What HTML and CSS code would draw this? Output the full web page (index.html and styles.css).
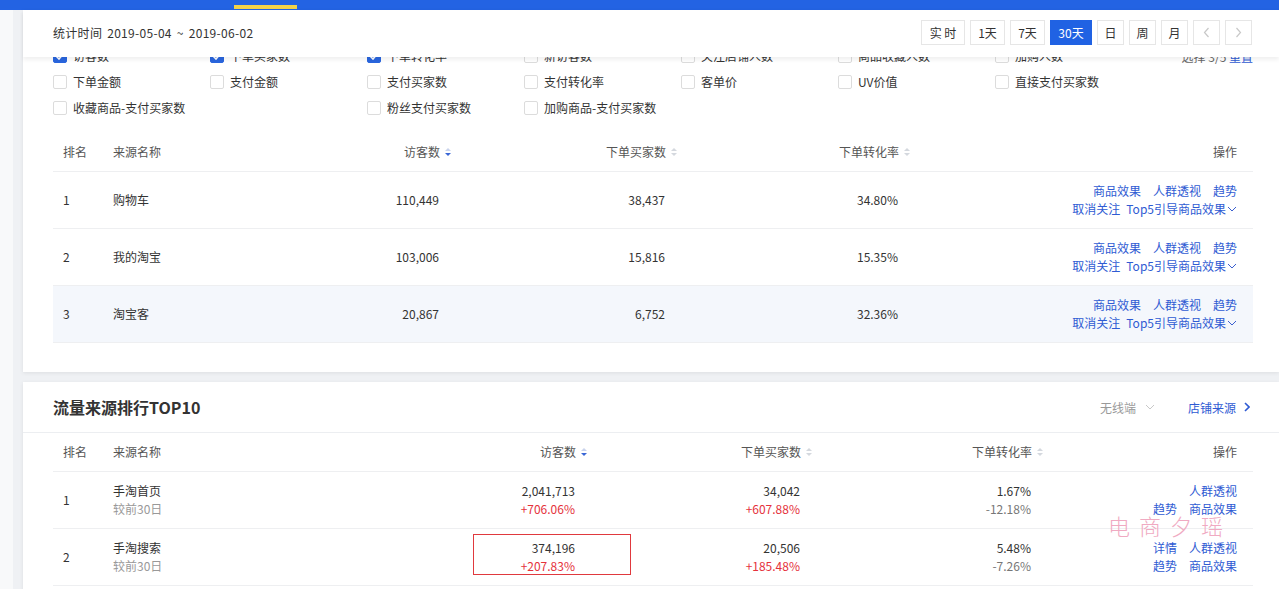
FILE: index.html
```html
<!DOCTYPE html>
<html lang="zh-CN">
<head>
<meta charset="utf-8">
<title>流量来源</title>
<link rel="stylesheet" href="styles.css">
</head>
<body>
<div class="topbar"><span class="topbar-tab"></span></div>
<div class="page">
  <div class="side"></div>
  <main class="main">
    <section class="card card-1">
      <div class="stat-header">
        <div class="stat-time">统计时间 2019-05-04 ~ 2019-06-02</div>
        <div class="range-btns">
          <span class="rbtn w44">实 时</span>
          <span class="rbtn w35">1天</span>
          <span class="rbtn w35">7天</span>
          <span class="rbtn w42 active">30天</span>
          <span class="rbtn w27">日</span>
          <span class="rbtn w27">周</span>
          <span class="rbtn w27">月</span>
          <span class="rbtn w27 arrow"><svg width="7" height="11" viewBox="0 0 7 11"><path d="M5.5 1 L1.5 5.5 L5.5 10" fill="none" stroke="#c8c8c8" stroke-width="1.2"/></svg></span>
          <span class="rbtn w27 arrow"><svg width="7" height="11" viewBox="0 0 7 11"><path d="M1.5 1 L5.5 5.5 L1.5 10" fill="none" stroke="#c8c8c8" stroke-width="1.2"/></svg></span>
        </div>
      </div>
      <div class="filters">
        <label class="cb checked"><i class="box"><svg width="10" height="8" viewBox="0 0 10 8"><path d="M1 4 L4 7 L9 1" fill="none" stroke="#fff" stroke-width="1.6"/></svg></i>访客数</label>
        <label class="cb checked"><i class="box"><svg width="10" height="8" viewBox="0 0 10 8"><path d="M1 4 L4 7 L9 1" fill="none" stroke="#fff" stroke-width="1.6"/></svg></i>下单买家数</label>
        <label class="cb checked"><i class="box"><svg width="10" height="8" viewBox="0 0 10 8"><path d="M1 4 L4 7 L9 1" fill="none" stroke="#fff" stroke-width="1.6"/></svg></i>下单转化率</label>
        <label class="cb"><i class="box"></i>新访客数</label>
        <label class="cb"><i class="box"></i>关注店铺人数</label>
        <label class="cb"><i class="box"></i>商品收藏人数</label>
        <label class="cb"><i class="box"></i>加购人数</label>
        <div class="select-info">选择 3/5 <span class="link">重置</span></div>
        <label class="cb"><i class="box"></i>下单金额</label>
        <label class="cb"><i class="box"></i>支付金额</label>
        <label class="cb"><i class="box"></i>支付买家数</label>
        <label class="cb"><i class="box"></i>支付转化率</label>
        <label class="cb"><i class="box"></i>客单价</label>
        <label class="cb"><i class="box"></i>UV价值</label>
        <label class="cb"><i class="box"></i>直接支付买家数</label>
        <span></span>
        <label class="cb span2"><i class="box"></i>收藏商品-支付买家数</label>
        <label class="cb"><i class="box"></i>粉丝支付买家数</label>
        <label class="cb"><i class="box"></i>加购商品-支付买家数</label>
      </div>
      <div class="table t1">
        <div class="tr thead">
          <div class="td rank">排名</div>
          <div class="td name">来源名称</div>
          <div class="td th-num"><span>访客数</span><svg class="sort" width="6" height="10" viewBox="0 0 6 10"><path d="M0 4 L3 1 L6 4Z" fill="#c9d3ec"/><path d="M0 6 L3 9 L6 6Z" fill="#3a67d6"/></svg></div>
          <div class="td th-num"><span>下单买家数</span><svg class="sort" width="6" height="10" viewBox="0 0 6 10"><path d="M0 4 L3 1 L6 4Z" fill="#d4d8de"/><path d="M0 6 L3 9 L6 6Z" fill="#d4d8de"/></svg></div>
          <div class="td th-num"><span>下单转化率</span><svg class="sort" width="6" height="10" viewBox="0 0 6 10"><path d="M0 4 L3 1 L6 4Z" fill="#d4d8de"/><path d="M0 6 L3 9 L6 6Z" fill="#d4d8de"/></svg></div>
          <div class="td ops">操作</div>
        </div>
        <div class="tr">
          <div class="td rank">1</div>
          <div class="td name">购物车</div>
          <div class="td num">110,449</div>
          <div class="td num">38,437</div>
          <div class="td num">34.80%</div>
          <div class="td ops">
            <div class="ops-line"><span class="link">商品效果</span><span class="link">人群透视</span><span class="link">趋势</span></div>
            <div class="ops-line tight"><span class="link">取消关注</span><span class="link">Top5引导商品效果<svg class="chev" width="10" height="6" viewBox="0 0 10 6"><path d="M1 1 L5 5 L9 1" fill="none" stroke="#3a5fcf" stroke-width="1"/></svg></span></div>
          </div>
        </div>
        <div class="tr">
          <div class="td rank">2</div>
          <div class="td name">我的淘宝</div>
          <div class="td num">103,006</div>
          <div class="td num">15,816</div>
          <div class="td num">15.35%</div>
          <div class="td ops">
            <div class="ops-line"><span class="link">商品效果</span><span class="link">人群透视</span><span class="link">趋势</span></div>
            <div class="ops-line tight"><span class="link">取消关注</span><span class="link">Top5引导商品效果<svg class="chev" width="10" height="6" viewBox="0 0 10 6"><path d="M1 1 L5 5 L9 1" fill="none" stroke="#3a5fcf" stroke-width="1"/></svg></span></div>
          </div>
        </div>
        <div class="tr hover">
          <div class="td rank">3</div>
          <div class="td name">淘宝客</div>
          <div class="td num">20,867</div>
          <div class="td num">6,752</div>
          <div class="td num">32.36%</div>
          <div class="td ops">
            <div class="ops-line"><span class="link">商品效果</span><span class="link">人群透视</span><span class="link">趋势</span></div>
            <div class="ops-line tight"><span class="link">取消关注</span><span class="link">Top5引导商品效果<svg class="chev" width="10" height="6" viewBox="0 0 10 6"><path d="M1 1 L5 5 L9 1" fill="none" stroke="#3a5fcf" stroke-width="1"/></svg></span></div>
          </div>
        </div>
      </div>
    </section>

    <section class="card card-2">
      <div class="card-title-bar">
        <h2 class="card-title">流量来源排行TOP10</h2>
        <div class="title-tools">
          <span class="device">无线端<svg class="dev-chev" width="10" height="6" viewBox="0 0 10 6"><path d="M1 1 L5 5 L9 1" fill="none" stroke="#c8c8c8" stroke-width="1"/></svg></span>
          <span class="link shop-src">店铺来源<svg class="src-chev" width="6" height="10" viewBox="0 0 6 10"><path d="M1 1 L5 5 L1 9" fill="none" stroke="#2f5bd3" stroke-width="1.6"/></svg></span>
        </div>
      </div>
      <div class="table t2">
        <div class="tr thead">
          <div class="td rank">排名</div>
          <div class="td name">来源名称</div>
          <div class="td th-num"><span>访客数</span><svg class="sort" width="6" height="10" viewBox="0 0 6 10"><path d="M0 4 L3 1 L6 4Z" fill="#c9d3ec"/><path d="M0 6 L3 9 L6 6Z" fill="#3a67d6"/></svg></div>
          <div class="td th-num"><span>下单买家数</span><svg class="sort" width="6" height="10" viewBox="0 0 6 10"><path d="M0 4 L3 1 L6 4Z" fill="#d4d8de"/><path d="M0 6 L3 9 L6 6Z" fill="#d4d8de"/></svg></div>
          <div class="td th-num"><span>下单转化率</span><svg class="sort" width="6" height="10" viewBox="0 0 6 10"><path d="M0 4 L3 1 L6 4Z" fill="#d4d8de"/><path d="M0 6 L3 9 L6 6Z" fill="#d4d8de"/></svg></div>
          <div class="td ops">操作</div>
        </div>
        <div class="tr">
          <div class="td rank">1</div>
          <div class="td name two"><div>手淘首页</div><div class="sub">较前30日</div></div>
          <div class="td num two"><div>2,041,713</div><div class="up">+706.06%</div></div>
          <div class="td num two"><div>34,042</div><div class="up">+607.88%</div></div>
          <div class="td num two"><div>1.67%</div><div class="down">-12.18%</div></div>
          <div class="td ops">
            <div class="ops-line"><span class="link">人群透视</span></div>
            <div class="ops-line"><span class="link">趋势</span><span class="link">商品效果</span></div>
          </div>
        </div>
        <div class="tr">
          <div class="td rank">2</div>
          <div class="td name two"><div>手淘搜索</div><div class="sub">较前30日</div></div>
          <div class="td num two marked"><div>374,196</div><div class="up">+207.83%</div><span class="mark-box"></span></div>
          <div class="td num two"><div>20,506</div><div class="up">+185.48%</div></div>
          <div class="td num two"><div>5.48%</div><div class="down">-7.26%</div></div>
          <div class="td ops">
            <div class="ops-line"><span class="link">详情</span><span class="link">人群透视</span></div>
            <div class="ops-line"><span class="link">趋势</span><span class="link">商品效果</span></div>
          </div>
        </div>
      </div>
      <div class="watermark">电商夕瑶</div>
    </section>
  </main>
</div>
</body>
</html>
```
FILE: styles.css
```css
* { box-sizing: border-box; }

body {
  margin: 0;
  background: #eff1f4;
  font-family: "Noto Sans CJK SC", "Microsoft YaHei", sans-serif;
  font-size: 12px;
  color: #333;
  overflow: hidden;
}

.topbar {
  height: 10px;
  background: #2363e3;
  display: flex;
}
.topbar-tab {
  margin-left: 234px;
  margin-top: 5px;
  width: 63px;
  height: 4px;
  background: #f2d24a;
}

.page {
  display: flex;
}
.side {
  width: 13px;
  flex: none;
  background: #f8f9fa;
}
.main {
  flex: 1;
  margin-left: 10px;
  display: flex;
  flex-direction: column;
  gap: 10px;
}

.card {
  background: #fff;
  box-shadow: 0 1px 4px rgba(0, 0, 0, 0.08);
  position: relative;
}
.card-1 {
  padding-bottom: 29px;
}
.card-2 {
  padding-bottom: 10px;
}

/* sticky stat header */
.stat-header {
  height: 47px;
  display: flex;
  justify-content: space-between;
  align-items: flex-start;
  padding: 10px 27px 0 30px;
  position: relative;
  z-index: 1;
  background: #fff;
  box-shadow: 0 3px 4px rgba(0, 0, 0, 0.06);
}
.stat-time {
  line-height: 25px;
  color: #333;
  word-spacing: 2px;
  letter-spacing: 0.3px;
}
.range-btns {
  display: flex;
  gap: 5px;
}
.rbtn {
  height: 25px;
  line-height: 23px;
  border: 1px solid #e6e6e6;
  background: #fff;
  text-align: center;
  color: #333;
  display: flex;
  align-items: center;
  justify-content: center;
}
.rbtn.active {
  background: #2062e3;
  border-color: #2062e3;
  color: #fff;
}
.w44 { width: 44px; }
.w42 { width: 42px; }
.w35 { width: 35px; }
.w27 { width: 27px; }

/* filter checkboxes */
.filters {
  margin: -14px 26px 0 30px;
  display: grid;
  grid-template-columns: repeat(7, 157px) 1fr;
  grid-auto-rows: 26px;
  align-items: center;
}
.cb {
  display: flex;
  align-items: center;
  gap: 6px;
  color: #333;
  line-height: 16px;
  white-space: nowrap;
}
.cb .box {
  width: 14px;
  height: 14px;
  border: 1px solid #dcdcdc;
  border-radius: 2px;
  background: #fff;
  display: flex;
  align-items: center;
  justify-content: center;
  flex: none;
}
.cb.checked .box {
  background: #2a66de;
  border-color: #2a66de;
}
.cb.span2 {
  grid-column: span 2;
}
.select-info {
  justify-self: end;
  color: #666;
}

.link {
  color: #2f5bd3;
}

/* tables */
.table {
  margin: 12px 26px 0 30px;
}
.t2 {
  margin-top: 0;
}
.tr {
  display: grid;
  height: 57px;
  align-items: center;
  border-bottom: 1px solid #eeeff1;
}
.tr.thead {
  height: 39px;
  color: #555;
}
.tr.hover {
  background: #f4f7fc;
}
.t1 .tr {
  grid-template-columns: 50px 150px 200px 226px 233px 1fr;
}
.t2 .tr {
  grid-template-columns: 50px 286px 200px 225px 231px 1fr;
}
.td {
  line-height: 18px;
}
.rank {
  padding-left: 10px;
}
.name {
  padding-left: 10px;
}
.num {
  text-align: right;
  padding-right: 14px;
}
.th-num {
  display: flex;
  justify-content: flex-end;
  align-items: center;
  gap: 5px;
  padding-right: 2px;
}
.sort {
  display: block;
}
.ops {
  text-align: right;
  padding-right: 16px;
}
.ops-line {
  display: flex;
  justify-content: flex-end;
  gap: 12px;
}
.ops-line.tight {
  gap: 6px;
}
.chev {
  margin-left: 1px;
  vertical-align: 2px;
}
.sub {
  color: #999;
}
.up {
  color: #e5323c;
}
.down {
  color: #777;
}
.marked {
  position: relative;
}
.mark-box {
  position: absolute;
  left: 84px;
  top: -5px;
  width: 158px;
  height: 41px;
  border: 1px solid #e0393e;
}

/* card 2 title */
.card-title-bar {
  height: 51px;
  display: flex;
  align-items: center;
  justify-content: space-between;
  padding: 0 29px 0 30px;
  border-bottom: 1px solid #eceef1;
}
.card-title {
  margin: 0;
  font-size: 16px;
  font-weight: bold;
  color: #333;
}
.title-tools {
  display: flex;
  align-items: center;
  gap: 33px;
}
.device {
  color: #999;
  display: flex;
  align-items: center;
  gap: 9px;
}
.shop-src {
  display: flex;
  align-items: center;
  gap: 8px;
}

.watermark {
  position: absolute;
  left: 1085px;
  top: 130px;
  font-size: 22px;
  letter-spacing: 9px;
  color: #f0aac2;
  font-weight: 300;
  line-height: 26px;
  pointer-events: none;
}
```
